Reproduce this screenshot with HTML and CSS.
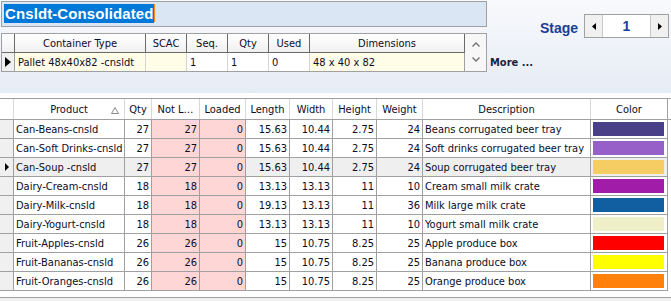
FILE: index.html
```html
<!DOCTYPE html>
<html>
<head>
    <title>Cnsldt-Consolidated</title>
    <link rel="stylesheet" href="styles.css">
</head>
<body>
    <div class="top-panel">
        <div class="container-col">
            <div class="title-box"><span class="title-sel">Cnsldt-Consolidated</span><span class="caret"></span></div>

            <div class="ctr-grid">
                <div class="ctr-body">
                    <div class="ctr-head">
                        <div class="ctr-cell c-ind"></div>
                        <div class="ctr-cell c-type">Container Type</div>
                        <div class="ctr-cell c-small">SCAC</div>
                        <div class="ctr-cell c-small">Seq.</div>
                        <div class="ctr-cell c-small">Qty</div>
                        <div class="ctr-cell c-small">Used</div>
                        <div class="ctr-cell c-dim">Dimensions</div>
                    </div>
                    <div class="ctr-row">
                        <div class="ctr-cell c-ind"><svg width="6" height="10" viewBox="0 0 6 10"><polygon points="0,0 6,5 0,10" fill="#000"/></svg></div>
                        <div class="ctr-cell c-type cream">Pallet 48x40x82 -cnsldt</div>
                        <div class="ctr-cell c-small cream"></div>
                        <div class="ctr-cell c-small">1</div>
                        <div class="ctr-cell c-small">1</div>
                        <div class="ctr-cell c-small">0</div>
                        <div class="ctr-cell c-dim cream">48 x 40 x 82</div>
                    </div>
                </div>
                <div class="vscroll">
                    <svg width="8" height="5" viewBox="0 0 8 5"><polyline points="0.5,4.5 4,1 7.5,4.5" fill="none" stroke="#707070" stroke-width="1.3"/></svg>
                    <svg width="8" height="5" viewBox="0 0 8 5"><polyline points="0.5,0.5 4,4 7.5,0.5" fill="none" stroke="#707070" stroke-width="1.3"/></svg>
                </div>
            </div>
        </div>

        <div class="more">More ...</div>

        <div class="stage">
            <span class="stage-label">Stage</span>
            <div class="spinner">
                <div class="spin-btn"><svg width="4" height="7" viewBox="0 0 4 7"><polygon points="4,0 0,3.5 4,7" fill="#000"/></svg></div>
                <div class="spin-value">1</div>
                <div class="spin-btn"><svg width="4" height="7" viewBox="0 0 4 7"><polygon points="0,0 4,3.5 0,7" fill="#000"/></svg></div>
            </div>
        </div>
    </div>

    <div class="grid">
        <div class="grid-head">
            <div class="cell w-ind"></div>
            <div class="cell w-product head-sort">Product <svg class="sort-icon" width="8" height="7" viewBox="0 0 8 7"><polygon points="4,0.5 7.5,6.5 0.5,6.5" fill="none" stroke="#8a8a8a" stroke-width="1"/></svg></div>
            <div class="cell w-qty">Qty</div>
            <div class="cell w-notl">Not L…</div>
            <div class="cell w-loaded">Loaded</div>
            <div class="cell w-length">Length</div>
            <div class="cell w-width">Width</div>
            <div class="cell w-height">Height</div>
            <div class="cell w-weight">Weight</div>
            <div class="cell w-desc">Description</div>
            <div class="cell w-color">Color</div>
        </div>
        <div id="grid-body">
            <!-- rows added by script -->
        </div>
    </div>

    <div class="footer"></div>

    <script>
        // Product rows
        const products = [
            ['Can-Beans-cnsld', 27, 27, 0, '15.63', '10.44', '2.75', 24, 'Beans corrugated beer tray', '#4a4087'],
            ['Can-Soft Drinks-cnsld', 27, 27, 0, '15.63', '10.44', '2.75', 24, 'Soft drinks corrugated beer tray', '#975fc8'],
            ['Can-Soup -cnsld', 27, 27, 0, '15.63', '10.44', '2.75', 24, 'Soup corrugated beer tray', '#f5cd62'],
            ['Dairy-Cream-cnsld', 18, 18, 0, '13.13', '13.13', '11', 10, 'Cream small milk crate', '#a21caa'],
            ['Dairy-Milk-cnsld', 18, 18, 0, '19.13', '13.13', '11', 36, 'Milk large milk crate', '#115fa0'],
            ['Dairy-Yogurt-cnsld', 18, 18, 0, '13.13', '13.13', '11', 10, 'Yogurt small milk crate', '#f0f0c8'],
            ['Fruit-Apples-cnsld', 26, 26, 0, '15', '10.75', '8.25', 25, 'Apple produce box', '#ff0000'],
            ['Fruit-Bananas-cnsld', 26, 26, 0, '15', '10.75', '8.25', 25, 'Banana produce box', '#ffff00'],
            ['Fruit-Oranges-cnsld', 26, 26, 0, '15', '10.75', '8.25', 25, 'Orange produce box', '#ff800a']
        ];

        const selectedRow = 2;
        const columns = ['w-product', 'w-qty num', 'w-notl num pink', 'w-loaded num pink', 'w-length num',
                         'w-width num', 'w-height num', 'w-weight num', 'w-desc'];

        function buildGrid() {
            const body = document.getElementById('grid-body');

            products.forEach((p, i) => {
                const row = document.createElement('div');
                row.className = 'grid-row' + (i === selectedRow ? ' selected' : '');

                const ind = document.createElement('div');
                ind.className = 'cell w-ind ind';
                if (i === selectedRow) {
                    ind.innerHTML = '<svg width="4" height="8" viewBox="0 0 4 8"><polygon points="0,0 4,4 0,8" fill="#000"/></svg>';
                }
                row.appendChild(ind);

                columns.forEach((cls, c) => {
                    const cell = document.createElement('div');
                    cell.className = 'cell ' + cls;
                    cell.textContent = p[c];
                    row.appendChild(cell);
                });

                const colorCell = document.createElement('div');
                colorCell.className = 'cell w-color';
                const swatch = document.createElement('div');
                swatch.className = 'swatch';
                swatch.style.background = p[9];
                colorCell.appendChild(swatch);
                row.appendChild(colorCell);

                body.appendChild(row);
            });
        }

        buildGrid();
    </script>
</body>
</html>
```

FILE: styles.css
```css
body {
    margin: 0;
    width: 671px;
    height: 301px;
    overflow: hidden;
    background: white;
    font-family: "DejaVu Sans Condensed", "DejaVu Sans", "Liberation Sans", sans-serif;
    font-stretch: semi-condensed;
    font-size: 11px;
    color: #0c0c26;
}

/* ---- top panel ---- */

.top-panel {
    display: flex;
    align-items: flex-start;
    height: 93px;
    box-sizing: border-box;
    padding: 1px 0 0 1px;
    background: linear-gradient(to bottom, #f8f9fc, #e6ecf5);
}

.container-col {
    width: 486px;
}

.title-box {
    display: flex;
    height: 26px;
    box-sizing: border-box;
    padding: 2px 0 0 2px;
    border: 1px solid #a0a0a0;
    background: #dae6f3;
}

.title-sel {
    height: 19px;
    line-height: 19px;
    padding: 0 0 0 1px;
    background: #0078d7;
    color: white;
    font-family: "Liberation Sans", Arial, sans-serif;
    font-stretch: normal;
    font-weight: bold;
    font-size: 15px;
    letter-spacing: 0.1px;
}

.caret {
    width: 1px;
    height: 18px;
    background: #ff8a1c;
}

.ctr-grid {
    display: flex;
    height: 39px;
    margin-top: 6px;
    box-sizing: border-box;
    border: 1px solid #a0a0a0;
    background: white;
}

.ctr-body {
    flex: 1;
}

.ctr-head,
.ctr-row {
    display: flex;
}

.ctr-head {
    height: 19px;
    box-sizing: border-box;
    border-bottom: 1px solid #6a6a6a;
    background: linear-gradient(to bottom, #ffffff, #f0f0f0);
}

.ctr-row {
    height: 18px;
}

.ctr-cell {
    box-sizing: border-box;
    line-height: 19px;
    padding: 0 3px;
    white-space: nowrap;
    overflow: hidden;
}

.ctr-head .ctr-cell {
    text-align: center;
    border-right: 1px solid #6a6a6a;
}

.ctr-row .ctr-cell {
    line-height: 19px;
    border-right: 1px solid #d4d4d4;
}

.ctr-cell.c-ind { width: 13px; padding: 0; }
.ctr-cell.c-type { width: 131px; }
.ctr-cell.c-small { width: 41px; }
.ctr-cell.c-dim { width: 155px; }

.ctr-row .c-ind {
    display: flex;
    align-items: center;
    justify-content: center;
    background: #f0f0f0;
    border-right: 1px solid #a0a0a0;
}

.ctr-row .c-dim { border-right: 1px solid #a0a0a0; }

.cream { background: #fffde8; }

.vscroll {
    width: 21px;
    display: flex;
    flex-direction: column;
    align-items: center;
    justify-content: space-around;
    padding: 3px 0 4px;
    box-sizing: border-box;
    background: #f7f7f7;
}

.more {
    margin: 55px 0 0 3px;
    line-height: 14px;
    font-weight: bold;
    color: #1a1f3e;
}

.stage {
    display: flex;
    align-items: center;
    gap: 6px;
    margin: 13px 2px 0 auto;
}

.stage-label {
    font-family: "Liberation Sans", Arial, sans-serif;
    font-stretch: normal;
    font-weight: bold;
    font-size: 14px;
    color: #1c3d93;
    padding-top: 3px;
}

.spinner {
    display: flex;
    width: 85px;
    height: 24px;
    box-sizing: border-box;
    border: 1px solid #a0a0a0;
    background: white;
}

.spin-btn {
    width: 17px;
    display: flex;
    align-items: center;
    justify-content: center;
    background: #f0f0f0;
}

.spin-btn:first-child { border-right: 1px solid #c8c8c8; }
.spin-btn:last-child { border-left: 1px solid #c8c8c8; }

.spin-value {
    flex: 1;
    text-align: center;
    line-height: 22px;
    font-family: "Liberation Sans", Arial, sans-serif;
    font-stretch: normal;
    font-weight: bold;
    font-size: 14px;
    color: #1c3d93;
}

/* ---- product grid ---- */

.grid {
    margin-top: 5px;
}

.grid-head {
    display: flex;
    height: 22px;
    box-sizing: border-box;
    border-top: 1px solid #a0a0a0;
    border-bottom: 1px solid #a0a0a0;
}

.grid-head .cell {
    text-align: center;
    line-height: 22px;
    border-right: 1px solid #d8d8d8;
}

.grid-head .w-color { border-right: 1px solid #a0a0a0; }

.head-sort {
    position: relative;
}

.sort-icon {
    position: absolute;
    right: 5px;
    top: 8px;
}

.grid-row {
    display: flex;
    height: 19px;
    box-sizing: border-box;
    border-bottom: 1px solid #a0a0a0;
    width: 668px;
}

.cell {
    box-sizing: border-box;
    height: 100%;
    padding: 0 2px;
    line-height: 19px;
    border-right: 1px solid #a0a0a0;
    white-space: nowrap;
    overflow: hidden;
}

.num { text-align: right; }

.pink { background: #ffd6d6; }

.ind {
    display: flex;
    align-items: center;
    padding: 0 0 0 5px;
    background: #f0f0f0;
}

.grid-row.selected .cell { background-color: #efefef; }
.grid-row.selected .cell.pink { background-color: #ffd6d6; }

.w-ind { width: 14px; }
.w-product { width: 111px; }
.w-qty { width: 27px; }
.w-notl { width: 48px; }
.w-loaded { width: 46px; }
.w-length { width: 44px; }
.w-width { width: 43px; }
.w-height { width: 44px; }
.w-weight { width: 46px; }
.w-desc { width: 168px; }
.w-color { width: 77px; }

.swatch {
    height: 14px;
    margin: 2px 1px 0 0;
}

.footer {
    margin-top: 6px;
    height: 10px;
    border-top: 1px solid #a0a0a0;
    background: #f0f0f0;
}
```
